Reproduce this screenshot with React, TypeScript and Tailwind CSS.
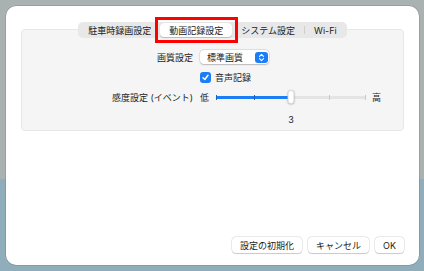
import React from 'react';

const TABS = ['駐車時録画設定', '動画記録設定', 'システム設定', 'Wi-Fi'];
const ACTIVE = 1;
const TICKS = [0, 25, 50, 75, 100];
const VALUE = 3;

function Stepper() {
  return (
    <div className="flex h-[11px] w-[13px] items-center justify-center rounded-[3px] bg-[#1c7ef6]">
      <svg width="7" height="9" viewBox="0 0 7 9" fill="none">
        <path d="M1.5 3.3 3.5 1.4l2 1.9" stroke="white" strokeWidth="1.1" strokeLinecap="round" strokeLinejoin="round" />
        <path d="M1.5 5.7 3.5 7.6l2-1.9" stroke="white" strokeWidth="1.1" strokeLinecap="round" strokeLinejoin="round" />
      </svg>
    </div>
  );
}

function Checkbox() {
  return (
    <div className="flex h-[11px] w-[11px] items-center justify-center rounded-[3px] bg-[#1c7ef6]">
      <svg width="9" height="9" viewBox="0 0 9 9" fill="none">
        <path d="M2 4.7 3.8 6.5 7 2.3" stroke="white" strokeWidth="1.5" strokeLinecap="round" strokeLinejoin="round" />
      </svg>
    </div>
  );
}

function Slider() {
  const pct = ((VALUE - 1) / 4) * 100;
  return (
    <div className="relative h-[14px] w-[150px]">
      <div className="absolute top-[6px] left-0 h-[3px] w-full rounded-full bg-[#e4e4e4]" />
      <div
        className="absolute top-[6px] left-0 h-[3px] rounded-full bg-[#1c7ef6]"
        style={{ width: `${pct}%` }}
      />
      {TICKS.map((t) => (
        <div
          key={t}
          className={`absolute top-[5px] h-[5px] w-px ${t <= pct ? 'bg-[#1462c4]' : 'bg-[#c9c9c9]'}`}
          style={{ left: `calc(${t}% - ${t === 100 ? 1 : 0}px)` }}
        />
      ))}
      <div
        className="absolute top-0 h-[14px] w-[7px] -translate-x-1/2 rounded-[3px] border border-[#d6d6d6] bg-white shadow-[0_0.5px_1.5px_rgba(0,0,0,0.25)]"
        style={{ left: `${pct}%` }}
      />
    </div>
  );
}

export default function App() {
  return (
    <div
      className="flex h-[271px] w-[424px] bg-[linear-gradient(to_bottom,#aab1b1_0%,#aab1b1_66%,#8fadbb_66%,#8fadbb_100%)] pt-[6px] pr-[5px] pb-[6px] pl-[6px] text-[#222222]"
      style={{ fontFamily: 'Inter, "Noto Sans CJK JP", sans-serif' }}
    >
      <div className="flex flex-1 flex-col rounded-[10px] bg-white px-[14px] pt-[16px] pb-[12px] shadow-[0_0_0_0.5px_rgba(0,0,0,0.2)]">
        <div className="flex flex-col items-center px-px">
          <div className="relative z-10 flex h-[16px] items-center rounded-[5px] bg-[#e8e8e8] p-px text-[9px] leading-none">
            {TABS.map((tab, i) => (
              <React.Fragment key={tab}>
                {i === 3 && <div className="h-[8px] w-px bg-[#cfcfcf]" />}
                <div
                  className={`relative flex h-[14px] items-center px-[9px] ${
                    i === ACTIVE
                      ? 'rounded-[4px] bg-white shadow-[0_0.5px_1px_rgba(0,0,0,0.2)]'
                      : ''
                  }`}
                >
                  {tab}
                  {i === ACTIVE && (
                    <div className="absolute -top-[6px] -right-[6px] -bottom-[6px] -left-[5px] border-[3px] border-[#ff0000]" />
                  )}
                </div>
              </React.Fragment>
            ))}
          </div>
          <div className="-mt-[9px] flex h-[102px] w-full flex-col rounded-[4px] border border-[#e7e7e7] bg-[#f5f5f5] pt-[20px] text-[9px] leading-none">
            <div className="grid grid-cols-[171px_1fr] items-center gap-x-[7px]">
              <div className="text-right">画質設定</div>
              <div className="flex h-[14px] w-[69px] items-center justify-between rounded-[4px] bg-white pr-px pl-[7px] shadow-[0_0_0_0.5px_rgba(0,0,0,0.12),0_0.5px_1.5px_rgba(0,0,0,0.2)]">
                <span>標準画質</span>
                <Stepper />
              </div>

              <div className="mt-[8px]" />
              <div className="mt-[8px] flex items-center gap-[4px]">
                <Checkbox />
                <span>音声記録</span>
              </div>

              <div className="mt-[7px] text-right">感度設定 (イベント)</div>
              <div className="mt-[7px] flex items-center gap-[7px]">
                <span>低</span>
                <Slider />
                <span className="ml-[-1px]">高</span>
              </div>

              <div />
              <div className="mt-[11px] pl-[83px]">
                <span className="inline-block w-[16px] text-center">{VALUE}</span>
              </div>
            </div>
          </div>
        </div>

        <div className="mt-auto flex justify-end gap-[6px] pr-px text-[9px] leading-none">
          {['設定の初期化', 'キャンセル', 'OK'].map((b) => (
            <button
              key={b}
              className="flex h-[16px] items-center rounded-[4px] bg-white px-[8px] shadow-[0_0_0_0.5px_rgba(0,0,0,0.15),0_0.5px_1px_rgba(0,0,0,0.15)]"
            >
              {b}
            </button>
          ))}
        </div>
      </div>
    </div>
  );
}
